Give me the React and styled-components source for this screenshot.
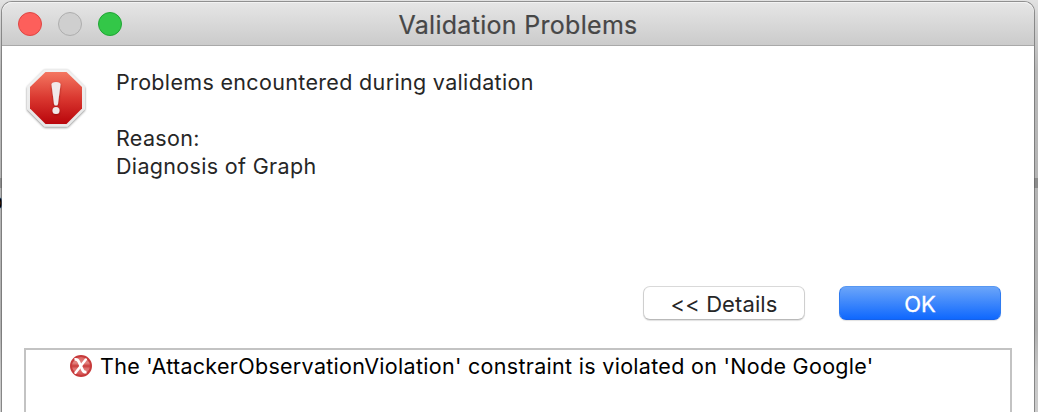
import React from "react";
import styled, { createGlobalStyle } from "styled-components";

const GlobalStyle = createGlobalStyle`
  *, *::before, *::after { box-sizing: border-box; }
  html, body { margin: 0; padding: 0; overflow: hidden; }
  body { font-family: Inter, "Liberation Sans", sans-serif; }
`;

const Backdrop = styled.div`
  position: relative;
  width: 1038px;
  height: 412px;
  overflow: hidden;
  padding: 2px 4px 0 2px;
  background:
    linear-gradient(#8c8c8c, #8c8c8c) 0 178px / 100% 10px no-repeat,
    linear-gradient(#e2e2e2 0, #d2d2d2 20px, #b8b8b8 70px, #b0b0b0 330px, #c6c6c6 370px, #cccccc 412px);
`;

const Peek = styled.span`
  position: absolute;
  left: -9.5px;
  top: 189px;
  font-size: 21px;
  line-height: 26px;
  color: #000;
  -webkit-text-stroke: 0.4px #000;
`;

const Window = styled.section`
  position: relative;
  display: flex;
  flex-direction: column;
  width: 1032px;
  height: 420px;
  background: #fff;
  border-radius: 10px 10px 0 0;
  box-shadow: 0 0 0 1px rgba(90, 90, 90, 0.6);
`;

const TitleBar = styled.header`
  display: grid;
  grid-template-columns: 1fr auto 1fr;
  align-items: center;
  flex: none;
  height: 44px;
  padding: 0 16px;
  border-radius: 10px 10px 0 0;
  border-bottom: 1px solid #a9a9a9;
  background: linear-gradient(#e6e6e6, #cbcbcb);
  box-shadow: inset 0 1px 0 #f3f3f3;
`;

const Lights = styled.div`
  display: flex;
  gap: 16px;
`;

const Light = styled.span`
  width: 24px;
  height: 24px;
  border-radius: 50%;
  background: ${(p) => p.$fill};
  border: 1px solid ${(p) => p.$edge};
`;

const Title = styled.h1`
  margin: 0;
  padding-top: 2px;
  font-size: 25px;
  font-weight: 400;
  line-height: 30px;
  letter-spacing: 0.3px;
  color: #474747;
  -webkit-text-stroke: 0.2px #474747;
  white-space: nowrap;
`;

const Message = styled.div`
  display: flex;
  flex: none;
  height: 240px;
  padding: 20px 0 0 22px;
  gap: 28px;
`;

const MessageText = styled.p`
  margin: 0;
  padding-top: 2px;
  font-size: 21.5px;
  line-height: 28px;
  letter-spacing: 0.33px;
  color: #262626;
  white-space: pre;
`;

const Actions = styled.div`
  display: flex;
  justify-content: flex-end;
  flex: none;
  gap: 34px;
  height: 62px;
  padding-right: 33px;
`;

const Button = styled.button`
  width: 162px;
  height: 34px;
  padding: 1px 0 0;
  border: 1px solid ${(p) => (p.$primary ? "#2f7bf0" : "#cfcfcf")};
  border-top-color: ${(p) => (p.$primary ? "#5797f2" : "#d9d9d9")};
  border-bottom-color: ${(p) => (p.$primary ? "#1561ea" : "#b9b9b9")};
  border-radius: 7px;
  background: ${(p) => (p.$primary ? "linear-gradient(#6ba5f9, #0f68fe)" : "#fff")};
  box-shadow: 0 1px 1px rgba(0, 0, 0, 0.12);
  color: ${(p) => (p.$primary ? "#fff" : "#262626")};
  font-family: inherit;
  font-size: 22px;
  line-height: 26px;
  -webkit-text-stroke: ${(p) => (p.$primary ? "0.3px" : "0")} currentColor;
  white-space: nowrap;
`;

const Details = styled.div`
  flex: 1;
  margin: 0 22px;
  border: 2px solid #c3c3c3;
  padding: 2px 0 0 44px;
`;

const Problem = styled.div`
  display: flex;
  align-items: center;
  gap: 8px;
  height: 28px;
  font-size: 21.5px;
  line-height: 28px;
  color: #000;
  white-space: nowrap;
`;

const StopIcon = () => (
  <svg width="64" height="64" viewBox="0 0 64 64">
    <defs>
      <linearGradient id="stopFill" x1="0" y1="0" x2="0" y2="1">
        <stop offset="0" stopColor="#f47761" />
        <stop offset=".5" stopColor="#da3830" />
        <stop offset="1" stopColor="#b9050b" />
      </linearGradient>
      <linearGradient id="stopRim" x1="0" y1="0" x2="0" y2="1">
        <stop offset="0" stopColor="#f2f2f2" />
        <stop offset="1" stopColor="#e6e6e6" />
      </linearGradient>
      <filter id="stopShadow" x="-20%" y="-20%" width="140%" height="150%">
        <feDropShadow dx="0" dy="1.2" stdDeviation="1" floodOpacity=".45" />
      </filter>
      <filter id="markShadow" x="-50%" y="-20%" width="200%" height="150%">
        <feDropShadow dx="0" dy="1" stdDeviation="1" floodColor="#700" floodOpacity=".6" />
      </filter>
    </defs>
    <path
      d="M20.5 3.5h23L60.500 20.500v22.500L43.500 60h-23L3.500 43V20.500z"
      fill="url(#stopRim)"
      stroke="#ececec"
      strokeLinejoin="round"
      filter="url(#stopShadow)"
    />
    <path d="M21.500 6h21L58 21v21.500L42.500 58h-21L6 42.500V21z" fill="url(#stopFill)" />
    <g fill="#f1e9e9" filter="url(#markShadow)">
      <path d="M27.500 18.500q0-2.500 4.500-2.500t4.500 2.500l-2.500 19.500q-.3 1.500-2 1.500t-2-1.500z" />
      <circle cx="32" cy="44.500" r="3.500" />
    </g>
  </svg>
);

const ErrorIcon = () => (
  <svg width="22" height="22" viewBox="0 0 22 22">
    <defs>
      <linearGradient id="errorFill" x1="0" y1="0" x2="0" y2="1">
        <stop offset="0" stopColor="#d9605e" />
        <stop offset=".35" stopColor="#e28480" />
        <stop offset=".5" stopColor="#c93c3c" />
        <stop offset=".65" stopColor="#e07876" />
        <stop offset="1" stopColor="#d34a4a" />
      </linearGradient>
    </defs>
    <circle cx="11" cy="11" r="10" fill="url(#errorFill)" stroke="#c73a3b" strokeWidth="2" />
    <path d="M4.500 4.500q3-.8 4.300 2.200l3.700 8.100q1.200 2.600 4 2.400" fill="none" stroke="#fff" strokeWidth="2.800" />
    <path d="M15.800 4.500L5.500 17.800" stroke="#fff" strokeWidth="2.500" strokeLinecap="round" />
  </svg>
);

const Label = styled.span`
  letter-spacing: ${(p) => p.$tracking || 0}px;
`;

export default function App() {
  return (
    <>
      <GlobalStyle />
      <Backdrop>
        <Peek>o</Peek>
        <Window>
          <TitleBar>
            <Lights>
              <Light $fill="#fd5f5b" $edge="#df4643" />
              <Light $fill="#cfcfcf" $edge="#aeaeae" />
              <Light $fill="#33c748" $edge="#20a534" />
            </Lights>
            <Title>Validation Problems</Title>
          </TitleBar>
          <Message>
            <StopIcon />
            <MessageText>
              {"Problems encountered during validation\n\nReason:\nDiagnosis of Graph"}
            </MessageText>
          </Message>
          <Actions>
            <Button type="button"><Label $tracking={0.1}>&lt;&lt; Details</Label></Button>
            <Button type="button" $primary><Label>OK</Label></Button>
          </Actions>
          <Details>
            <Problem>
              <ErrorIcon />
              <Label $tracking={0.3}>The 'AttackerObservationViolation' constraint is violated on 'Node Google'</Label>
            </Problem>
          </Details>
        </Window>
      </Backdrop>
    </>
  );
}
